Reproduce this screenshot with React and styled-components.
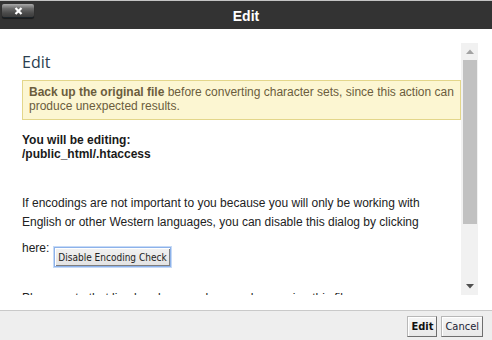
import React from 'react';
import styled, { createGlobalStyle } from 'styled-components';

const GlobalStyle = createGlobalStyle`
  html, body {
    margin: 0;
    padding: 0;
    background: #ffffff;
  }
  body {
    font-family: 'Liberation Sans', Arial, sans-serif;
  }
`;

const Dialog = styled.div`
  width: 492px;
  height: 340px;
  display: flex;
  flex-direction: column;
  background: #fff;
  overflow: hidden;
`;

const TitleBar = styled.div`
  height: 28px;
  border-top: 1px solid #c4c4c4;
  background: #333333;
  display: flex;
  align-items: center;
  justify-content: center;
  position: relative;
  flex-shrink: 0;
`;

const Title = styled.div`
  color: #fff;
  font-family: 'Liberation Sans', Arial, sans-serif;
  font-weight: bold;
  font-size: 14px;
  line-height: 16px;
  margin-top: 1px;
`;

const CloseButton = styled.button`
  position: absolute;
  left: 2px;
  top: 3px;
  width: 32px;
  height: 13px;
  padding: 0;
  border: none;
  border-radius: 2px;
  background: linear-gradient(#aaaaaa 0%, #6a6a6a 35%, #4a4a4a 70%, #3c3c3c 100%);
  box-shadow: 0 1px 0 #1b2329, 0 2px 1px rgba(0, 0, 0, 0.5);
  display: flex;
  align-items: center;
  justify-content: center;
  cursor: pointer;
`;

const Body = styled.div`
  flex: 1;
  padding: 14px 14px 15px 14px;
  display: flex;
  min-height: 0;
`;

const Scroller = styled.div`
  flex: 1;
  display: flex;
  min-height: 0;
`;

const Content = styled.div`
  flex: 1;
  overflow: hidden;
  padding: 9px 0 0 8px;
  color: #222;
  font-size: 12px;
`;

const Heading = styled.h2`
  margin: 0 0 8px 0;
  font-family: 'Open Sans', 'Liberation Sans', sans-serif;
  font-weight: 400;
  font-size: 16px;
  line-height: 20px;
  color: #2b3e50;
`;

const Warning = styled.div`
  background: #fcf6d2;
  border: 1px solid #e3d68a;
  color: #6b5d3d;
  padding: 4px 4px 6px 6px;
  font-size: 12px;
  line-height: 14px;
`;

const FileInfo = styled.div`
  margin-top: 13px;
  font-weight: bold;
  color: #1a1a1a;
  line-height: 14px;
`;

const Para = styled.p`
  margin: ${p => p.gap}px 0 0 0;
  line-height: 19px;
  color: #222;
`;

const HereRow = styled.div`
  display: flex;
  align-items: flex-start;
  margin-top: 7px;
  line-height: 19px;
  color: #222;
`;

const InlineButton = styled.button`
  margin: 8px 0 0 5px;
  height: 20px;
  padding: 0 3px;
  font-family: 'DejaVu Sans Condensed', 'DejaVu Sans', sans-serif;
  font-size: 10px;
  color: #222;
  background: linear-gradient(#f2f2f2, #e2e2e2);
  border: 1px solid #8db2ea;
  box-shadow: inset 1px 1px 0 #fff, inset -1px -1px 0 #7e7e7e, 0 0 0 1px #c6daf6;
  border-radius: 0;
`;

const ScrollBar = styled.div`
  width: 17px;
  background: #f1f1f1;
  display: flex;
  flex-direction: column;
  flex-shrink: 0;
`;

const Arrow = styled.div`
  height: 17px;
  display: flex;
  align-items: center;
  justify-content: center;
  flex-shrink: 0;
`;

const Thumb = styled.div`
  height: 164px;
  margin: 0 1px 0 2px;
  background: #c1c1c1;
  flex-shrink: 0;
`;

const Track = styled.div`
  flex: 1;
`;

const Footer = styled.div`
  height: 30px;
  border-top: 1px solid #c9c9c9;
  background: #eeeeee;
  display: flex;
  align-items: center;
  justify-content: flex-end;
  gap: 4px;
  padding: 2px 9px 0 0;
  box-sizing: border-box;
  flex-shrink: 0;
`;

const FooterButton = styled.button`
  height: 21px;
  padding: 0 3px;
  font-family: 'DejaVu Sans Condensed', 'DejaVu Sans', sans-serif;
  font-size: 11px;
  font-weight: ${p => (p.primary ? 'bold' : 'normal')};
  color: ${p => (p.primary ? '#111' : '#223')};
  background: linear-gradient(#f6f6f6, #e8e8e8);
  border: 1px solid #b8b8b8;
  border-right-color: #6e6e6e;
  border-bottom-color: #6e6e6e;
  box-shadow: inset 1px 1px 0 #fff;
  border-radius: 0;
`;

const App = () => (
  <Dialog>
    <GlobalStyle />
    <TitleBar>
      <CloseButton aria-label="close">
        <svg width="9" height="8" viewBox="0 0 9 8">
          <path d="M1.5 1 L7.5 7 M7.5 1 L1.5 7" stroke="#fff" strokeWidth="2.2" />
        </svg>
      </CloseButton>
      <Title>Edit</Title>
    </TitleBar>
    <Body>
      <Scroller>
        <Content>
          <Heading>Edit</Heading>
          <Warning>
            <strong>Back up the original file</strong> before converting character sets, since this action can produce unexpected results.
          </Warning>
          <FileInfo>
            You will be editing:
            <br />
            /public_html/.htaccess
          </FileInfo>
          <Para gap={33}>
            If encodings are not important to you because you will only be working with English or other Western languages, you can disable this dialog by clicking
          </Para>
          <HereRow>
            <span>here:</span>
            <InlineButton>Disable Encoding Check</InlineButton>
          </HereRow>
          <Para gap={22}>
            Please note that line breaks may change when saving this file.
          </Para>
        </Content>
        <ScrollBar>
          <Arrow>
            <svg width="8" height="5" viewBox="0 0 8 5">
              <path d="M0 5 L4 0.5 L8 5 Z" fill="#a3a3a3" />
            </svg>
          </Arrow>
          <Thumb />
          <Track />
          <Arrow>
            <svg width="8" height="5" viewBox="0 0 8 5">
              <path d="M0 0 L8 0 L4 4.5 Z" fill="#505050" />
            </svg>
          </Arrow>
        </ScrollBar>
      </Scroller>
    </Body>
    <Footer>
      <FooterButton primary>Edit</FooterButton>
      <FooterButton>Cancel</FooterButton>
    </Footer>
  </Dialog>
);

export default App;
